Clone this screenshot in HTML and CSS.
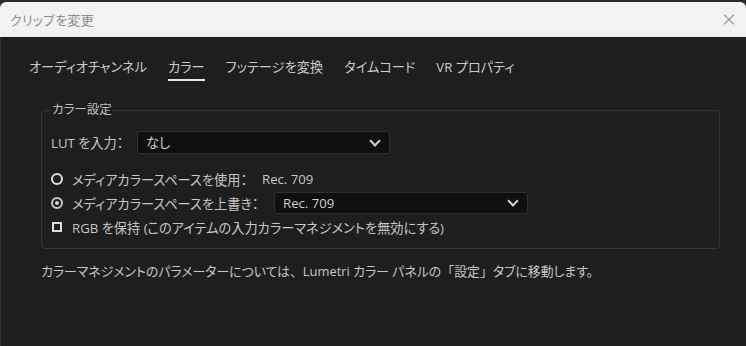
FILE: index.html
```html
<!DOCTYPE html>
<html lang="ja">
  <head>
    <meta charset="UTF-8" />
    <title>クリップを変更</title>
    <link rel="stylesheet" href="styles.css">
  </head>
  <body>
    <div class="window">
      <div class="title_bar">
        <span class="title_text">クリップを変更</span>
        <span class="close_button"></span>
      </div>
      <div class="body">
        <div class="tabs">
          <span class="tab">オーディオチャンネル</span>
          <span class="tab tab_active">カラー</span>
          <span class="tab">フッテージを変換</span>
          <span class="tab">タイムコード</span>
          <span class="tab">VR プロパティ</span>
        </div>
        <fieldset class="group">
          <legend>カラー設定</legend>
          <div class="row row_lut">
            <span class="label label_lut">LUT を入力：</span>
            <div class="select select_lut">
              <span>なし</span>
              <span class="chevron"></span>
            </div>
          </div>
          <div class="row row_radio1">
            <span class="radio"></span>
            <span class="label label_use">メディアカラースペースを使用：</span>
            <span class="value">Rec. 709</span>
          </div>
          <div class="row">
            <span class="radio radio_on"></span>
            <span class="label label_override">メディアカラースペースを上書き：</span>
            <div class="select select_space">
              <span>Rec. 709</span>
              <span class="chevron"></span>
            </div>
          </div>
          <div class="row">
            <span class="checkbox"></span>
            <span class="label">RGB を保持 (このアイテムの入力カラーマネジメントを無効にする)</span>
          </div>
        </fieldset>
        <p class="note">カラーマネジメントのパラメーターについては<span class="wide">、</span>Lumetri カラー パネルの<span class="wide">「設定」</span>タブに移動します。</p>
      </div>
    </div>
  </body>
</html>
```

FILE: styles.css
```css
html,
body {
  margin: 0;
  height: 100%;
  background-color: #1e1e1e;
}

.window {
  height: 100%;
  display: flex;
  flex-direction: column;
  background-color: #2a2a2a;
  padding-top: 2px;
  box-sizing: border-box;
  font-family: "Open Sans", "Noto Sans CJK JP", sans-serif;
  font-feature-settings: "palt";
}

.title_bar {
  height: 35px;
  flex-shrink: 0;
  background-color: #f2f2f2;
  border-radius: 6px 6px 0 0;
  display: flex;
  align-items: center;
  justify-content: space-between;
  padding: 0 10px 0 10px;
}

.title_text {
  font-size: 13px;
  color: #8c8c8c;
  letter-spacing: 0.2px;
}

.close_button {
  position: relative;
  width: 12px;
  height: 12px;
  margin-right: 1px;
}

.close_button::before,
.close_button::after {
  content: "";
  position: absolute;
  left: -1px;
  top: 5px;
  width: 14px;
  height: 1px;
  background-color: #8a8a8a;
  transform: rotate(45deg);
}

.close_button::after {
  transform: rotate(-45deg);
}

.body {
  flex: 1;
  background-color: #1e1e1e;
  border-left: 1px solid #2e2e2e;
  padding: 0 26px 0 40px;
  color: #c6c6c6;
  font-size: 13.2px;
}

.tabs {
  display: flex;
  gap: 21px;
  padding-top: 21px;
  margin-left: -12px;
}

.tab {
  line-height: 18px;
  padding-bottom: 3px;
  border-bottom: 2px solid transparent;
  color: #cbcbcb;
}

.tab_active {
  border-bottom-color: #e6e6e6;
}

.group {
  margin: 21px 0 0 0;
  border: 1px solid #353535;
  border-radius: 4px;
  padding: 0 9px 10px 9px;
}

.group legend {
  padding: 0 1px;
  line-height: 16px;
  font-size: 12.5px;
  color: #c0c0c0;
}

.row {
  display: flex;
  align-items: center;
  height: 22px;
  margin-top: 2px;
}

.row_lut {
  height: 23px;
  margin-top: 13px;
}

.row_radio1 {
  margin-top: 14px;
}

.label_lut {
  width: 86px;
}

.label_use {
  width: 190px;
}

.label_override {
  width: 202px;
}

.select {
  height: 100%;
  box-sizing: border-box;
  background-color: #0f0f0f;
  border: 1px solid #2f2f2f;
  border-radius: 3px;
  display: flex;
  align-items: center;
  justify-content: space-between;
  padding: 0 10px 0 8px;
  color: #d0d0d0;
}

.select_lut {
  width: 253px;
}

.select_space {
  width: 254px;
}

.chevron {
  width: 6px;
  height: 6px;
  border-right: 2px solid #cfcfcf;
  border-bottom: 2px solid #cfcfcf;
  transform: translateY(-2px) rotate(45deg);
}

.radio {
  width: 12px;
  height: 12px;
  box-sizing: border-box;
  border: 2.5px solid #dedede;
  border-radius: 50%;
  margin-right: 9px;
  display: flex;
  align-items: center;
  justify-content: center;
}

.radio_on {
  border: 2px solid #c8c8c8;
}

.radio_on::after {
  content: "";
  width: 4px;
  height: 4px;
  border-radius: 50%;
  background-color: #d4d4d4;
}

.checkbox {
  width: 10px;
  height: 10px;
  box-sizing: border-box;
  border: 2px solid #dcdcdc;
  margin: 0 10px 0 1px;
}

.note {
  margin: 13px 0 0 0;
  line-height: 18px;
  font-size: 12.9px;
}

.wide {
  font-feature-settings: normal;
}
```
